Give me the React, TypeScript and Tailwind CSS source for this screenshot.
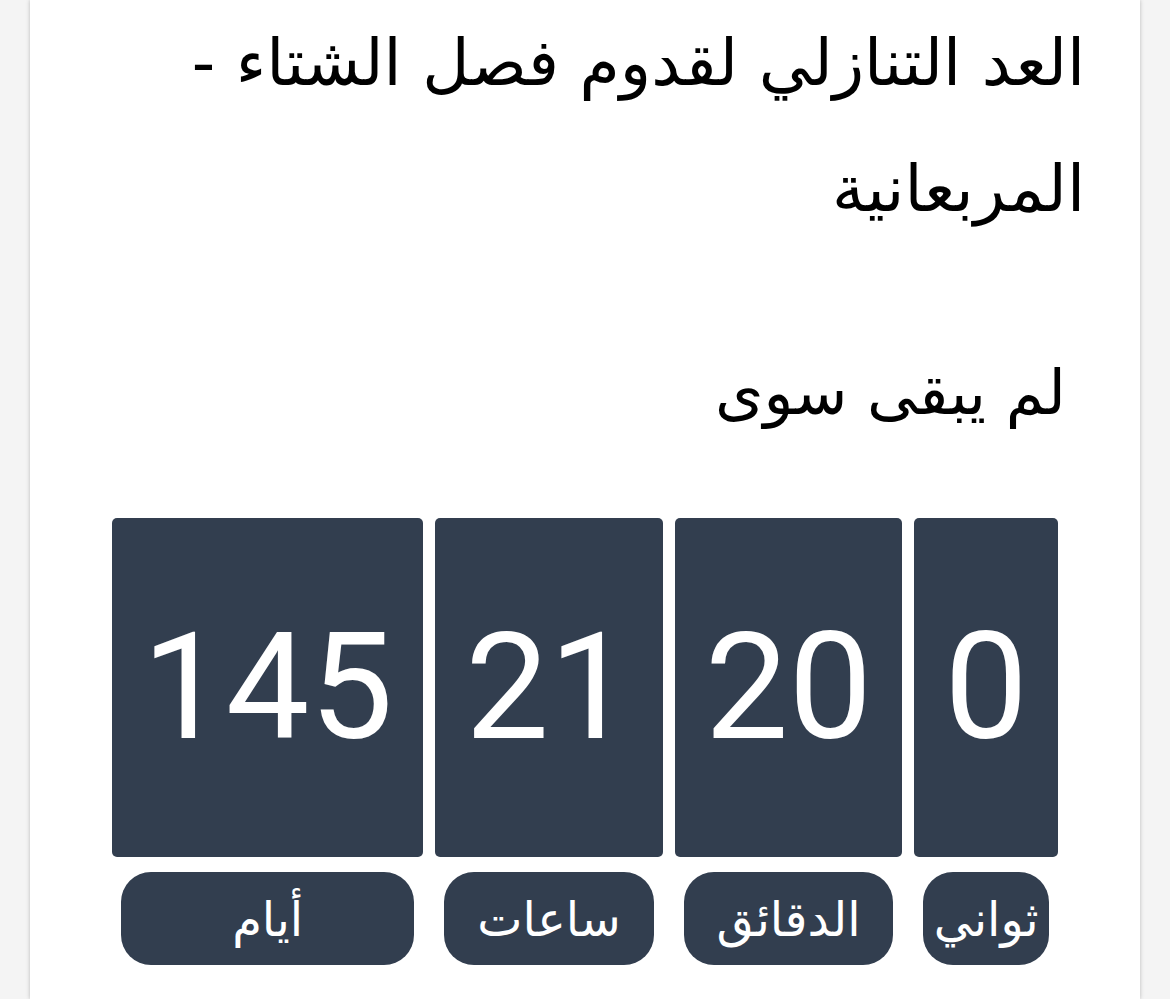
import React from "react";

const units = [
  { value: 0, label: "ثواني" },
  { value: 20, label: "الدقائق" },
  { value: 21, label: "ساعات" },
  { value: 145, label: "أيام" },
];

const arabic = { fontFamily: '"DejaVu Sans", sans-serif' };

export default function App() {
  return (
    <div className="min-h-screen bg-[#f4f4f4]" dir="rtl">
      <div className="mx-[30px] min-h-[999px] bg-white shadow-[0_0_4px_rgba(0,0,0,0.25)]">
        <div className="pr-[55px] pl-[40px]" style={arabic}>
          <h1 className="text-[65px] leading-[126px] font-normal text-black">
            العد التنازلي لقدوم فصل الشتاء - المربعانية
          </h1>
          <h3 className="mt-[106px] pr-[19px] text-[62px] leading-[70px] text-black">
            لم يبقى سوى
          </h3>
        </div>

        <div className="mt-[90px] flex justify-center gap-[12px]">
          {units.map((u) => (
            <div key={u.label} className="flex flex-col items-stretch">
              <div
                className="flex h-[339px] items-center justify-center rounded-[5px] bg-[#323e4f] px-[30px] text-[149px] leading-none text-white"
                style={{ fontFamily: "Roboto, sans-serif" }}
                dir="ltr"
              >
                {u.value}
              </div>
              <div
                className="mx-[9px] mt-[15px] flex h-[93px] items-center justify-center rounded-[30px] bg-[#323e4f] text-[48px] text-white"
                style={arabic}
              >
                {u.label}
              </div>
            </div>
          ))}
        </div>
      </div>
    </div>
  );
}
